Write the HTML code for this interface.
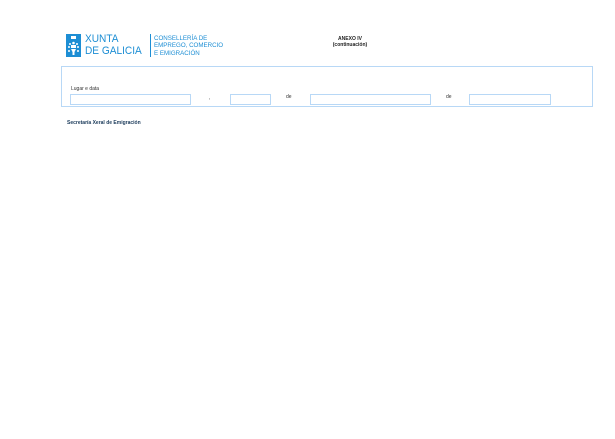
<!DOCTYPE html>
<html><head><meta charset="utf-8"><style>
body{margin:0;width:615px;height:439px;background:#fff;position:relative;font-family:"Liberation Sans",sans-serif;overflow:hidden}
.a{position:absolute}
.in{position:absolute;top:94px;height:9px;border:1px solid #b8d8f6;background:#fff}
.s{font-size:5px;color:#333}
</style></head><body>
<svg class="a" style="left:66px;top:34px" width="15" height="23" viewBox="0 0 15 23">
<rect width="15" height="23" fill="#1d8ed4"/>
<rect x="5" y="2" width="5" height="3" fill="#fff"/>
<circle cx="7.5" cy="9" r="1.3" fill="#fff"/><circle cx="4" cy="10" r="1" fill="#fff"/><circle cx="11" cy="10" r="1" fill="#fff"/>
<rect x="5" y="11" width="5" height="3" fill="#fff"/>
<circle cx="3" cy="13" r="1" fill="#fff"/><circle cx="12" cy="13" r="1" fill="#fff"/>
<path d="M5 15h5l-1.5 3v3h-2v-3z" fill="#fff"/>
<circle cx="3" cy="17" r="1" fill="#fff"/><circle cx="12" cy="17" r="1" fill="#fff"/>
</svg>
<div class="a" style="left:85px;top:34px;font-size:11px;line-height:11.5px;color:#1d8ed4;white-space:nowrap;transform:scaleX(0.92);transform-origin:left top">XUNTA<br>DE GALICIA</div>
<div class="a" style="left:150px;top:34px;width:1px;height:23px;background:#1d8ed4"></div>
<div class="a" style="left:154px;top:35px;font-size:6.2px;line-height:7.3px;color:#1d8ed4;white-space:nowrap">CONSELLERÍA DE<br>EMPREGO, COMERCIO<br>E EMIGRACIÓN</div>
<div class="a" style="left:320px;top:36px;width:60px;text-align:center;font-size:5px;font-weight:bold;line-height:6px;color:#222">ANEXO IV<br>(continuación)</div>
<div class="a" style="left:61px;top:66px;width:530px;height:39px;border:1px solid #b8d8f6"></div>
<div class="a s" style="left:71px;top:86px">Lugar e data</div>
<div class="in" style="left:70px;width:119px"></div>
<div class="a s" style="left:209px;top:95px">,</div>
<div class="in" style="left:230px;width:39px"></div>
<div class="a s" style="left:286px;top:94px">de</div>
<div class="in" style="left:310px;width:119px"></div>
<div class="a s" style="left:446px;top:94px">de</div>
<div class="in" style="left:469px;width:80px"></div>
<div class="a" style="left:67px;top:120px;font-size:5px;font-weight:bold;color:#1a3a5a">Secretaría Xeral de Emigración</div>
</body></html>
